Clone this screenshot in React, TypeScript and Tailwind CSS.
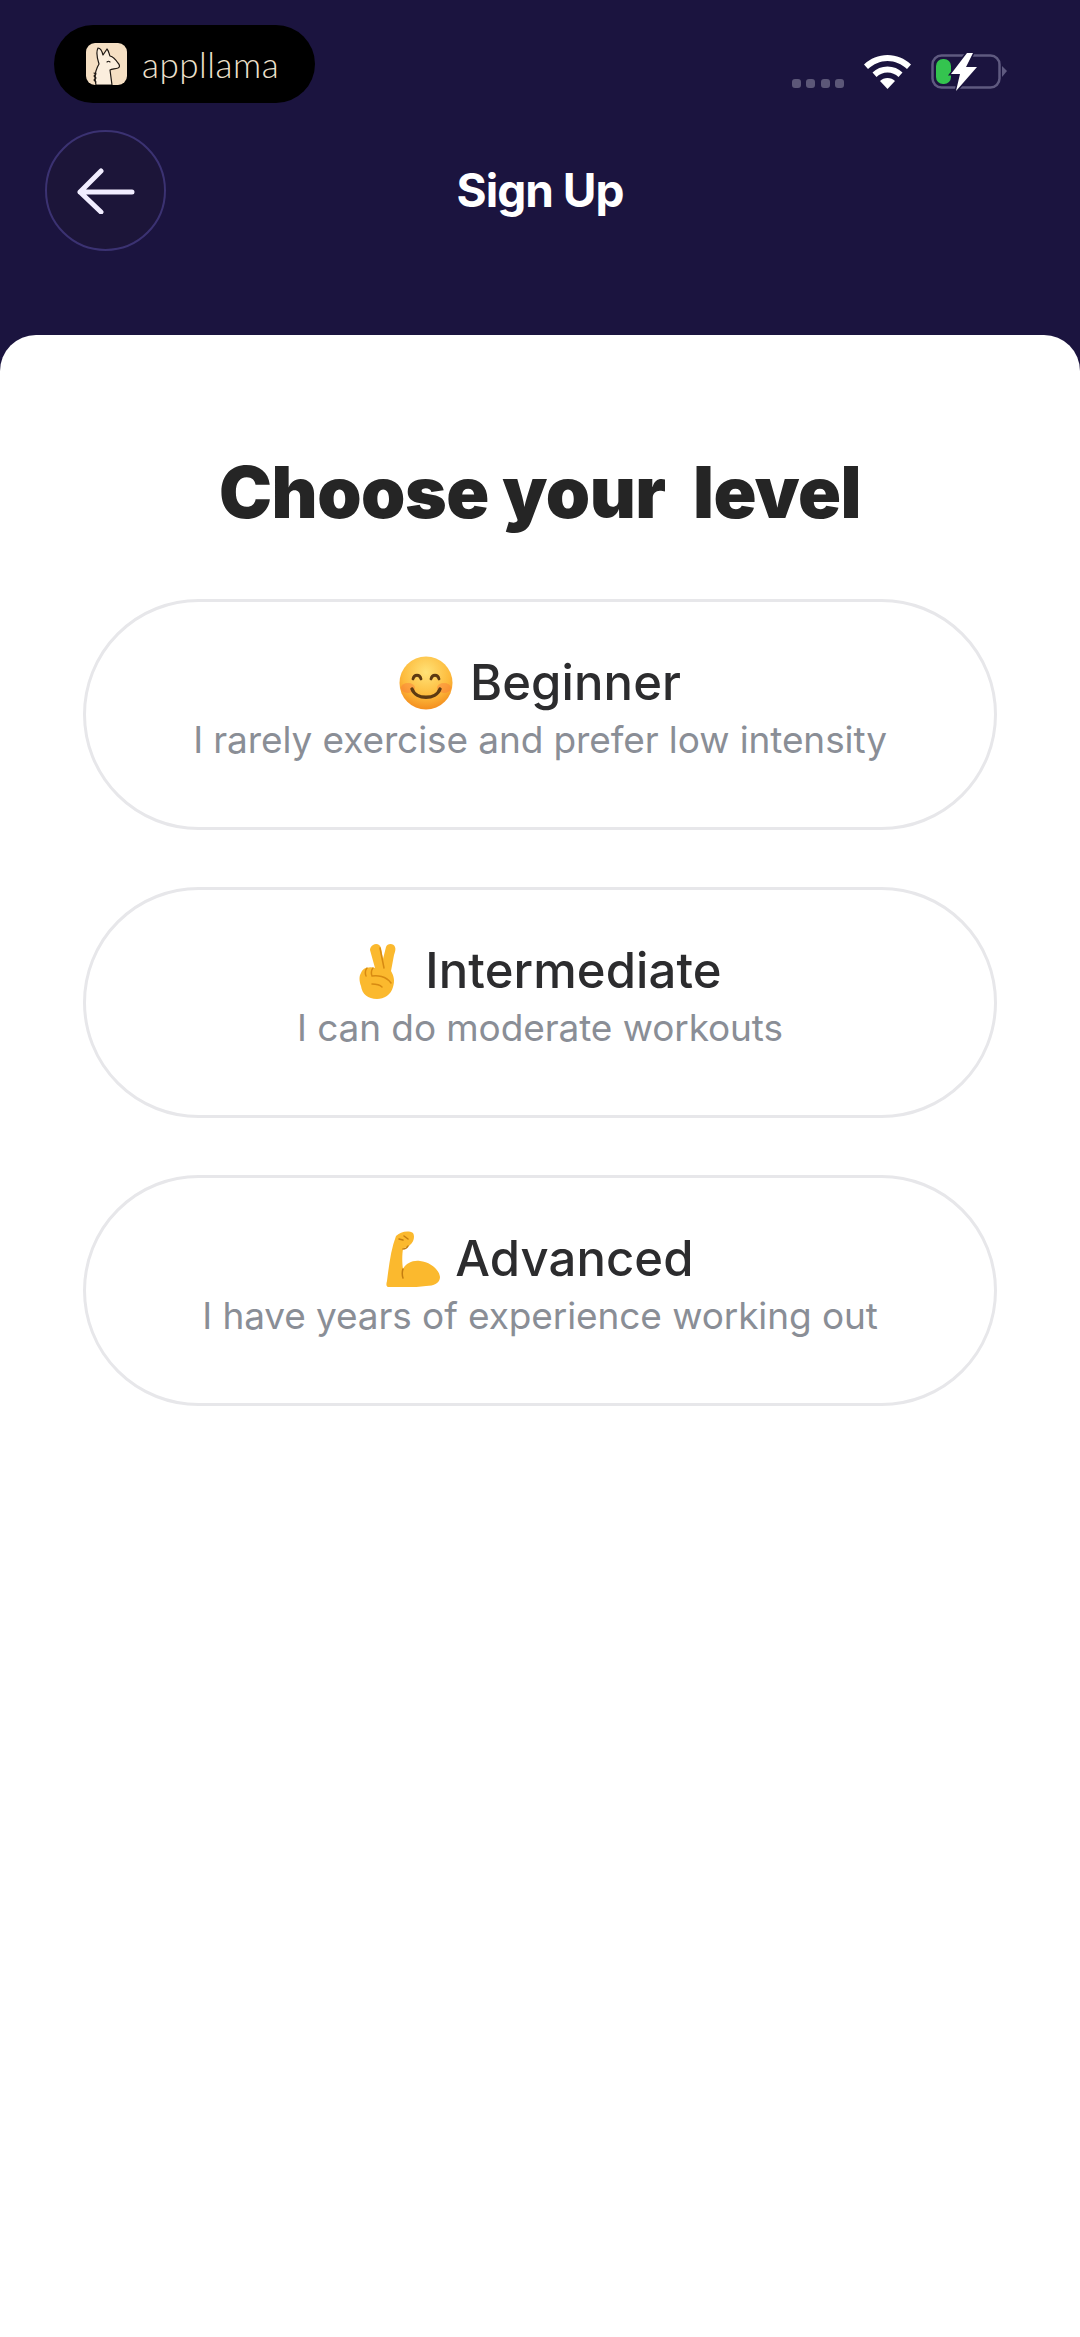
const levels = [
  { key: "beginner", title: "Beginner", text: "I rarely exercise and prefer low intensity", gap: "gap-[17px]" },
  { key: "intermediate", title: "Intermediate", text: "I can do moderate workouts", gap: "gap-[27px]" },
  { key: "advanced", title: "Advanced", text: "I have years of experience working out", gap: "gap-[15px]" },
];

function SmileEmoji() {
  return (
    <svg viewBox="0 0 54 54" className="h-[54px] w-[54px]">
      <defs>
        <radialGradient id="smileFace" cx="50%" cy="30%" r="72%">
          <stop offset="0%" stopColor="#ffe277" />
          <stop offset="62%" stopColor="#fdbb3c" />
          <stop offset="100%" stopColor="#f38a1c" />
        </radialGradient>
      </defs>
      <circle cx="27" cy="27" r="26.500" fill="url(#smileFace)" />
      <ellipse cx="9" cy="32" rx="7" ry="5" fill="#f9703a" opacity="0.4" />
      <ellipse cx="45" cy="32" rx="7" ry="5" fill="#f9703a" opacity="0.4" />
      <path d="M14 23c1-5 7-5 8 0M32 23c1-5 7-5 8 0" fill="none" stroke="#5d3a12" strokeWidth="2.800" strokeLinecap="round" />
      <path d="M13 33c4 11 24 11 28 0" fill="none" stroke="#5d3a12" strokeWidth="3.400" strokeLinecap="round" />
    </svg>
  );
}

function PeaceEmoji() {
  return (
    <svg viewBox="0 0 40 56" className="h-[56px] w-[40px]">
      <path
        d="M15 2c3-2 7-1 8 3l2 11 3-12c1-4 8-4 9 0 1 2 0 5-1 8l-3 16c3 5 4 10 2 16-2 8-9 12-16 12C10 56 4 51 3 43c-2-5-2-10 0-13 1-3 3-5 6-5 2-1 5-1 8 0L12 7c0-2 1-4 3-5z"
        fill="#fbb92e"
      />
      <path d="M22 5l4 20M9 25c-2 2-2 6-1 8M15 25c-2 2-2 6-1 8M14 33c5-1 14 0 19 7M14 41c4 0 8 1 10 3" fill="none" stroke="#d78a12" strokeWidth="1.500" strokeLinecap="round" />
    </svg>
  );
}

function MuscleEmoji() {
  return (
    <svg viewBox="0 0 54 56" className="h-[56px] w-[54px]">
      <path
        d="M10 5C14 1 22-1 27 2c2 3 1 9-3 12-3 3-6 2-7 4-1 6-1 14 0 20 3-6 10-9 17-8 10 1 19 8 20 16 0 6-6 9-14 9-12 2-28 1-37 1-3 0-3-3-2-6C3 34 5 18 10 5z"
        fill="#fbb92e"
      />
      <path d="M13 8l4 1M18 5l4 3M17 18c2 0 4-1 5-3M17 38c-1 3-1 6 0 9" fill="none" stroke="#c47d10" strokeWidth="1.500" strokeLinecap="round" />
    </svg>
  );
}

function LlamaLogo() {
  return (
    <svg viewBox="0 0 41 42" className="h-[42px] w-[41px] rounded-[9px]">
      <rect width="41" height="42" fill="#f5dfc3" />
      <path d="M10 42c-2-8 0-16 3-21-2-6-3-12-1-16 2 0 4 3 5 7l4-6c2 2 2 5 3 7 4 1 6 4 8 7 2 2 2 4 0 5-3 1-6 1-8 2l2 15z" fill="#fbeedd" stroke="#1d1712" strokeWidth="1.200" strokeLinejoin="round" />
      <path d="M21 19c1-1 2-1 3 0M8 30l2 1-2 2 2 2-2 2 2 2" fill="none" stroke="#1d1712" strokeWidth="1.100" strokeLinecap="round" />
    </svg>
  );
}

function StatusIcons() {
  return (
    <div className="flex items-center pt-[53px]">
      <div className="mt-[22px] flex gap-[5.500px]">
        <span className="h-[9px] w-[9px] rounded-[3px] bg-[#5c5778]" />
        <span className="h-[9px] w-[9px] rounded-[3px] bg-[#5c5778]" />
        <span className="h-[9px] w-[9px] rounded-[3px] bg-[#5c5778]" />
        <span className="h-[9px] w-[9px] rounded-[3px] bg-[#5c5778]" />
      </div>
      <svg viewBox="0 0 47 34" className="ml-[20px] h-[34px] w-[47px]">
        <path d="M23.500 0C14.500 0 6.500 3.500 0 9.500l4 4.500c5.500-5 12-8 19.500-8s14 3 19.500 8l4-4.500C40.500 3.500 32.500 0 23.500 0z" fill="#fff" />
        <path d="M23.500 11.500c-6 0-11 2.300-15 6l4 4.500c3-2.800 6.800-4.500 11-4.500s8 1.700 11 4.500l4-4.500c-4-3.700-9-6-15-6z" fill="#fff" />
        <path d="M23.500 23c-3 0-5.500 1-7.500 3l7.500 8 7.500-8c-2-2-4.500-3-7.500-3z" fill="#fff" />
      </svg>
      <svg viewBox="0 0 76 38" className="ml-[20px] h-[38px] w-[76px]">
        <rect x="1.500" y="2.500" width="67" height="32" rx="9" fill="none" stroke="#5f5a80" strokeWidth="2.500" />
        <rect x="5" y="6" width="15" height="25" rx="7" fill="#34c44f" />
        <path d="M71 13l5 5-5 6z" fill="#5f5a80" />
        <path d="M36 0L20 21h9l-4 17 21-24H35l7-14z" fill="#fff" stroke="#1b143f" strokeWidth="3" paintOrder="stroke" />
      </svg>
    </div>
  );
}

export default function App() {
  return (
    <div className="min-h-[2337px] bg-[#1b143f] font-['Inter',sans-serif]">
      <header className="h-[335px] pl-[45px] pr-[73px]">
        <div className="flex h-[103px] items-start justify-between">
          <div className="ml-[9px] mt-[25px] flex h-[78px] w-[261px] items-center rounded-full bg-black pl-[32px]">
            <LlamaLogo />
            <span className="ml-[15px] font-['Lato',sans-serif] text-[35px] font-light leading-none tracking-[0.5px] text-[#eee0cd]">appllama</span>
          </div>
          <StatusIcons />
        </div>
        <div className="-mr-[28px] mt-[27px] grid grid-cols-[1fr_auto_1fr] items-center">
          <button className="flex h-[121px] w-[121px] items-center justify-center rounded-full border-2 border-[#3b3272] bg-[#1c1539]">
            <svg viewBox="0 0 58 46" className="h-[46px] w-[58px]" fill="none" stroke="#f1edff" strokeWidth="5" strokeLinecap="round" strokeLinejoin="round">
              <path d="M55 24H3M24 3L3 24l21 20" />
            </svg>
          </button>
          <h1 className="text-[46px] font-bold tracking-[-1px] text-white">Sign Up</h1>
        </div>
      </header>

      <main className="min-h-[2002px] rounded-t-[36px] bg-white px-[83px] pt-[116px]">
        <h2 className="whitespace-pre text-center text-[71px] font-black leading-[82px] tracking-[-0.500px] text-[#252525]">Choose your  level</h2>
        <div className="mt-[66px] flex flex-col gap-[57px]">
          {levels.map((level) => (
            <div key={level.key} className="flex h-[231px] flex-col items-center justify-center rounded-full border-[3px] border-[#e7e7ea] pb-[10px]">
              <div className={`flex h-[56px] items-center ${level.gap}`}>
                {level.key === "beginner" && <SmileEmoji />}
                {level.key === "intermediate" && <PeaceEmoji />}
                {level.key === "advanced" && <MuscleEmoji />}
                <span className="text-[49px] font-medium leading-none tracking-[0.1px] text-[#2c2c2e]">{level.title}</span>
              </div>
              <p className="mt-[4px] text-[37px] leading-[50px] tracking-[-0.100px] text-[#8a8e96]">{level.text}</p>
            </div>
          ))}
        </div>
      </main>
    </div>
  );
}
